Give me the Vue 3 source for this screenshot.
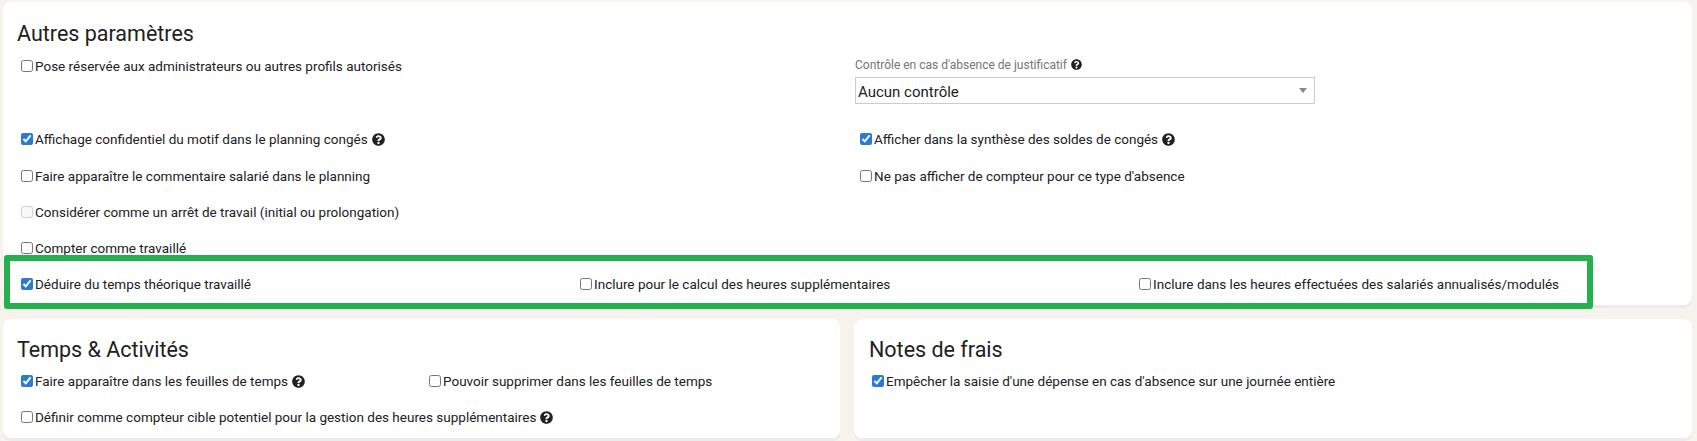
<script setup>
const helpPath = "M504 256c0 137-111 248-248 248S8 393 8 256 119 8 256 8s248 111 248 248zM263 90c-54 0-89 23-116 63-4 5-3 12 3 16l35 26c5 4 13 3 17-2 18-23 30-36 58-36 21 0 47 13 47 34 0 15-13 23-34 35-25 14-57 31-57 74v7c0 7 5 12 12 12h56c7 0 12-5 12-12v-2c0-29 86-31 86-111 0-60-62-104-119-104zm-7 256c-26 0-47 21-47 47s21 47 47 47 47-21 47-47-21-47-47-47z";
const leftRows = [
  { text: "Affichage confidentiel du motif dans le planning congés", checked: true, help: true },
  { text: "Faire apparaître le commentaire salarié dans le planning" },
  { text: "Considérer comme un arrêt de travail (initial ou prolongation)", disabled: true },
  { text: "Compter comme travaillé" },
];
const rightRows = [
  { text: "Afficher dans la synthèse des soldes de congés", checked: true, help: true },
  { text: "Ne pas afficher de compteur pour ce type d'absence" },
];
const triple = [
  { text: "Déduire du temps théorique travaillé", checked: true },
  { text: "Inclure pour le calcul des heures supplémentaires" },
  { text: "Inclure dans les heures effectuées des salariés annualisés/modulés" },
];
</script>

<template>
  <div class="page">
    <section class="card top">
      <h2>Autres paramètres</h2>
      <div class="split">
        <div class="col left">
          <label class="check first"><input type="checkbox" />Pose réservée aux administrateurs ou autres profils autorisés</label>
          <label v-for="r in leftRows" :key="r.text" class="check">
            <input type="checkbox" :checked="r.checked" :disabled="r.disabled" />{{ r.text }}
            <svg v-if="r.help" class="help" viewBox="0 0 512 512"><path :d="helpPath" /></svg>
          </label>
        </div>
        <div class="col right">
          <div class="field">
            <div class="field-label">Contrôle en cas d'absence de justificatif
              <svg class="help small" viewBox="0 0 512 512"><path :d="helpPath" /></svg>
            </div>
            <div class="select">Aucun contrôle<span class="caret"></span></div>
          </div>
          <label v-for="r in rightRows" :key="r.text" class="check">
            <input type="checkbox" :checked="r.checked" />{{ r.text }}
            <svg v-if="r.help" class="help" viewBox="0 0 512 512"><path :d="helpPath" /></svg>
          </label>
        </div>
      </div>
      <div class="triple">
        <label v-for="r in triple" :key="r.text" class="check">
          <input type="checkbox" :checked="r.checked" />{{ r.text }}
        </label>
      </div>
      <div class="highlight"></div>
    </section>
    <div class="bottom">
      <section class="card low">
        <h2>Temps &amp; Activités</h2>
        <div class="pair">
          <label class="check">
            <input type="checkbox" checked />Faire apparaître dans les feuilles de temps
            <svg class="help" viewBox="0 0 512 512"><path :d="helpPath" /></svg>
          </label>
          <label class="check"><input type="checkbox" />Pouvoir supprimer dans les feuilles de temps</label>
        </div>
        <label class="check">
          <input type="checkbox" />Définir comme compteur cible potentiel pour la gestion des heures supplémentaires
          <svg class="help" viewBox="0 0 512 512"><path :d="helpPath" /></svg>
        </label>
      </section>
      <section class="card low notes">
        <h2>Notes de frais</h2>
        <label class="check"><input type="checkbox" checked />Empêcher la saisie d'une dépense en cas d'absence sur une journée entière</label>
      </section>
    </div>
  </div>
</template>

<style>
html, body { margin: 0; background: #f6f3ec; }
</style>

<style scoped>
.page {
  width: 1697px;
  height: 441px;
  overflow: hidden;
  box-sizing: border-box;
  padding: 2px 5px 0 3px;
  font-family: Roboto, "Liberation Sans", sans-serif;
  color: #212121;
}
.card {
  background: #fff;
  border-radius: 8px;
  box-shadow: 0 3px 0 #ebebeb;
  box-sizing: border-box;
}
.top {
  position: relative;
  height: 303px;
  padding: 17px 0 0 14px;
}
h2 {
  margin: 0;
  font-size: 21.5px;
  font-weight: 400;
  line-height: 30px;
  color: #212121;
}
.check {
  display: flex;
  align-items: center;
  height: 20px;
  font-size: 13.5px;
  white-space: nowrap;
}
.check input {
  width: 12px;
  height: 12px;
  margin: 0 2px 0 4px;
  flex: none;
  accent-color: #2a7ad6;
}
.help {
  width: 13px;
  height: 13px;
  margin-left: 4px;
  fill: #212121;
  flex: none;
}
.help.small { width: 11px; height: 11px; margin-left: 1px; vertical-align: -1px; }
.split {
  display: grid;
  grid-template-columns: 838px 480px;
  margin-top: 7px;
}
.col { display: flex; flex-direction: column; gap: 16.3px; }
.left .first { margin-bottom: 37px; }
.field { margin-bottom: 9px; }
.field-label { font-size: 12px; color: #757575; line-height: 16px; margin-bottom: 4px; margin-top: 1px; }
.select {
  position: relative;
  width: 460px;
  height: 27px;
  box-sizing: border-box;
  border: 1px solid #ccc;
  font-size: 15px;
  line-height: 28px;
  padding-left: 2px;
  color: #212121;
}
.caret {
  position: absolute;
  right: 7px;
  top: 10px;
  border: 4px solid transparent;
  border-top: 5px solid #888;
  border-bottom: 0;
}
.right .check { margin-left: 1px; }
.triple {
  display: grid;
  grid-template-columns: 559px 559px 1fr;
  margin-top: 15.5px;
}
.highlight {
  position: absolute;
  left: 1px;
  top: 253px;
  width: 1589px;
  height: 54px;
  box-sizing: border-box;
  border: 6px solid #25b04f;
  border-radius: 3px;
  pointer-events: none;
}
.bottom {
  display: grid;
  grid-template-columns: 837px 1fr;
  gap: 14px;
  margin-top: 14px;
}
.low {
  height: 119px;
  padding: 16px 14px 0;
}
.notes h2 { margin-left: 1px; }
.pair {
  display: grid;
  grid-template-columns: 408px 1fr;
  margin: 6px 0 16px;
}
.notes .check { margin-top: 6px; margin-left: 0; }
</style>
